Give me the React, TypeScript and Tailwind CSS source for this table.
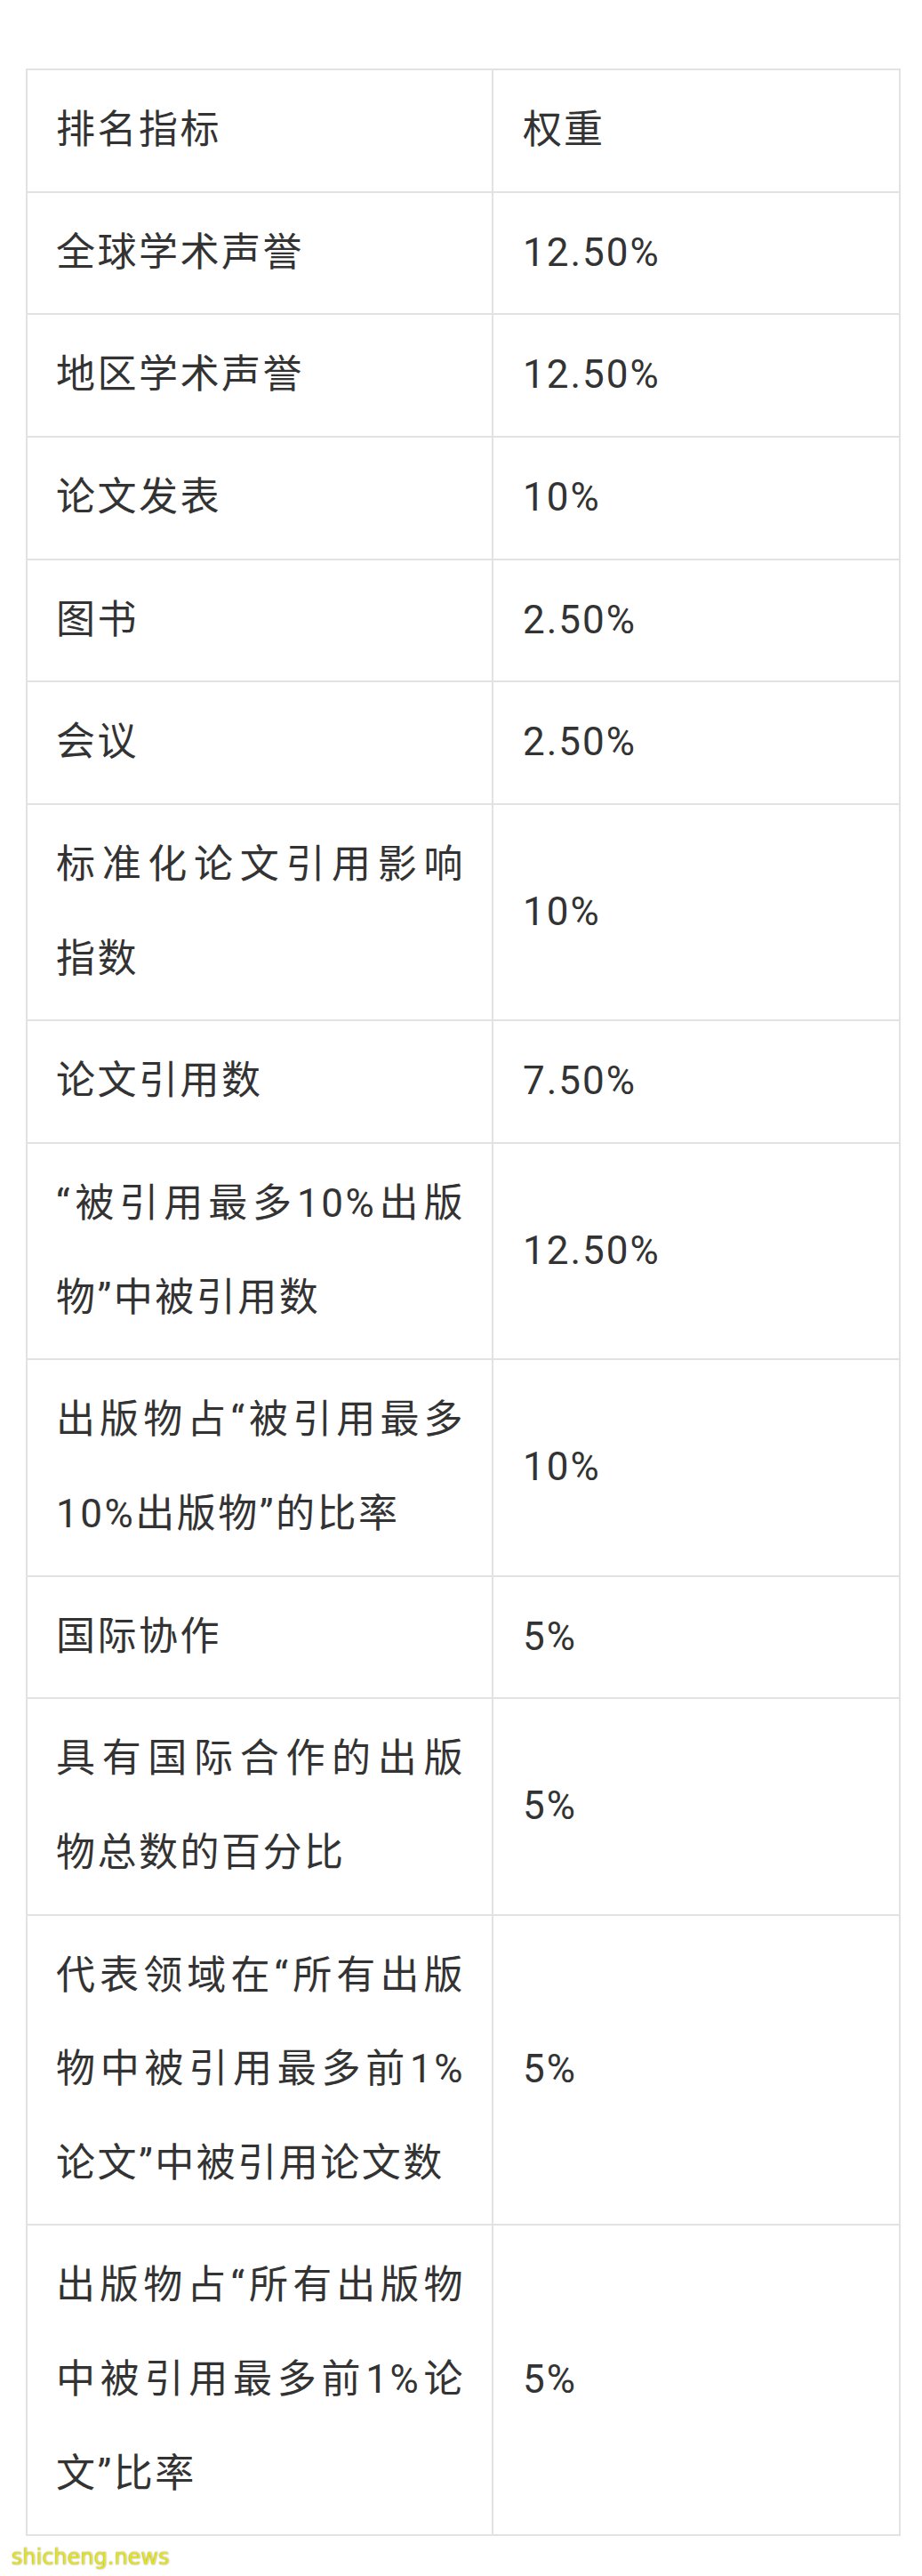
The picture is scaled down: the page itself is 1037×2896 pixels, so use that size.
const rows: [string, string][] = [
  ['排名指标', '权重'],
  ['全球学术声誉', '12.50%'],
  ['地区学术声誉', '12.50%'],
  ['论文发表', '10%'],
  ['图书', '2.50%'],
  ['会议', '2.50%'],
  ['标准化论文引用影响指数', '10%'],
  ['论文引用数', '7.50%'],
  ['“被引用最多10%出版物”中被引用数', '12.50%'],
  ['出版物占“被引用最多10%出版物”的比率', '10%'],
  ['国际协作', '5%'],
  ['具有国际合作的出版物总数的百分比', '5%'],
  ['代表领域在“所有出版物中被引用最多前1%论文”中被引用论文数', '5%'],
  ['出版物占“所有出版物中被引用最多前1%论文”比率', '5%'],
];

export default function App() {
  return (
    <div className="w-[1037px] h-[2896px] bg-white overflow-hidden font-['Roboto','Noto_Sans_CJK_SC',sans-serif] text-[#333333]">
      <div className="pt-[77px] pl-[29px]">
        <table className="w-[982px] table-fixed border-collapse border-2 border-[#e2e2e2]">
          <colgroup>
            <col className="w-[524px]" />
            <col className="w-[458px]" />
          </colgroup>
          <tbody>
            {rows.map(([name, weight], i) => (
              <tr key={i}>
                <td className="border-2 border-[#e2e2e2] pl-[32px] pr-[30px] py-[15px] align-middle text-justify text-[44px] leading-[105.65px] tracking-[2.5px]">
                  {name}
                </td>
                <td className="border-2 border-[#e2e2e2] pl-[33px] pr-[30px] py-[15px] align-middle text-[44px] leading-[105.65px] tracking-[2px]">
                  {weight}
                </td>
              </tr>
            ))}
          </tbody>
        </table>
      </div>
      <div className="pl-[13px] pt-[8px] font-['DejaVu_Sans',sans-serif] text-[24px] leading-[32px] text-[#e4e41c] [text-shadow:0_0_2px_#8a8a5a]">
        shicheng.news
      </div>
    </div>
  );
}
